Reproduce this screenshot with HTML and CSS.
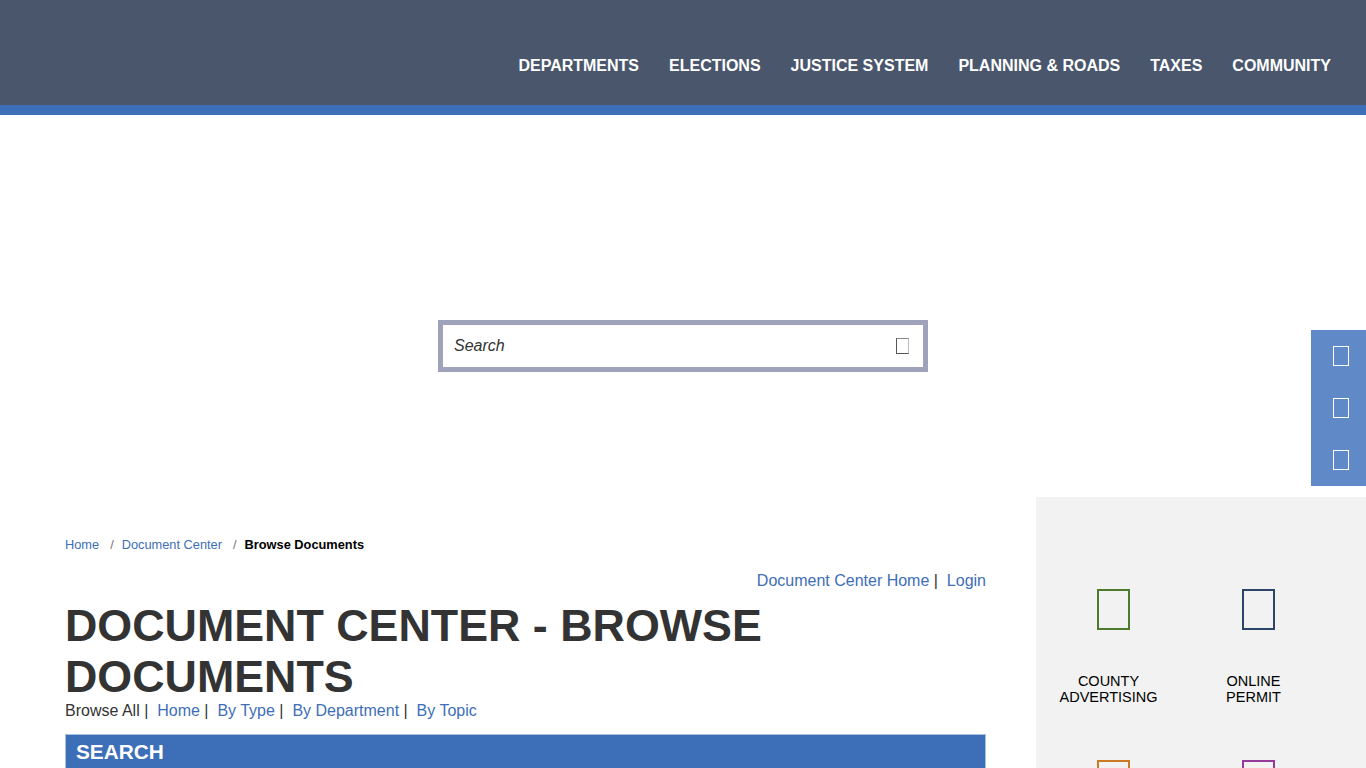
FILE: index.html
```html
<!DOCTYPE html>
<html lang="en">
<head>
<meta charset="utf-8">
<title>Document Center - Browse Documents</title>
<link rel="stylesheet" href="styles.css">
</head>
<body>
<header class="site-header">
  <nav class="main-nav">
    <a href="#">DEPARTMENTS</a>
    <a href="#">ELECTIONS</a>
    <a href="#">JUSTICE SYSTEM</a>
    <a href="#">PLANNING &amp; ROADS</a>
    <a href="#">TAXES</a>
    <a href="#">COMMUNITY</a>
  </nav>
</header>
<section class="hero">
  <form class="search-box">
    <span class="search-text">Search</span>
    <span class="search-icon"></span>
  </form>
</section>
<aside class="side-tabs">
  <span class="tab-icon"></span>
  <span class="tab-icon"></span>
  <span class="tab-icon"></span>
</aside>
<div class="page">
  <main class="content">
    <ol class="crumbs">
      <li><a href="#">Home</a></li>
      <li class="sep">/</li>
      <li><a href="#">Document Center</a></li>
      <li class="sep">/</li>
      <li class="current">Browse Documents</li>
    </ol>
    <p class="top-links"><a href="#">Document Center Home</a> |&nbsp; <a href="#">Login</a></p>
    <h1>DOCUMENT CENTER - BROWSE DOCUMENTS</h1>
    <p class="browse">Browse All |&nbsp; <a href="#">Home</a> |&nbsp; <a href="#">By Type</a> |&nbsp; <a href="#">By Department</a> |&nbsp; <a href="#">By Topic</a></p>
    <div class="search-head">SEARCH</div>
  </main>
  <aside class="quick">
    <a class="quick-item" href="#"><span class="quick-icon green"></span><span class="quick-label">COUNTY<br>ADVERTISING</span></a>
    <a class="quick-item" href="#"><span class="quick-icon navy"></span><span class="quick-label">ONLINE<br>PERMIT</span></a>
    <a class="quick-item" href="#"><span class="quick-icon orange"></span></a>
    <a class="quick-item" href="#"><span class="quick-icon purple"></span></a>
  </aside>
</div>
</body>
</html>
```
FILE: styles.css
```css
* { box-sizing: border-box; }
html, body { margin: 0; height: 768px; overflow: hidden; }
body { font-family: "Liberation Sans", Arial, sans-serif; color: #333; background: #fff; position: relative; }
a { color: #3d6eb8; text-decoration: none; }
p { margin: 0; }

.site-header { height: 115px; background: #49566b; border-bottom: 10px solid #3d6eb8; display: flex; justify-content: flex-end; padding: 57px 35px 0 0; }
.main-nav { display: flex; gap: 30px; font-size: 16px; font-weight: 700; line-height: 18px; }
.main-nav a { color: #fff; }

.hero { height: 382px; display: flex; justify-content: center; padding-top: 205px; }
.search-box { width: 490px; height: 52px; border: 5px solid #9ea3bb; display: flex; align-items: center; justify-content: space-between; padding: 0 14px 0 11px; }
.search-text { font-style: italic; font-size: 16px; color: #333; }
.search-icon { width: 13px; height: 16px; border: 1px solid #555; border-top-color: #888; border-right-color: #bbb; }

.side-tabs { position: absolute; top: 330px; right: 0; width: 55px; height: 156px; background: #5f8ac7; display: flex; flex-direction: column; align-items: center; justify-content: space-around; padding-left: 5px; }
.tab-icon { width: 16px; height: 20px; border: 1px solid #fff; }

.page { display: flex; justify-content: space-between; padding-left: 65px; height: 271px; overflow: hidden; }
.content { width: 921px; padding-top: 40px; }
.crumbs { list-style: none; margin: 0; padding: 0; display: flex; font-size: 12.8px; line-height: 15px; }
.crumbs .sep { margin: 0 8px 0 11px; color: #777; }
.crumbs .current { color: #000; font-weight: 700; }
.top-links { text-align: right; font-size: 16px; line-height: 18px; margin-top: 20px; }
h1 { margin: 10px 0 0; font-size: 44.8px; line-height: 51px; font-weight: 700; color: #333; }
.browse { font-size: 16px; line-height: 18px; }
.search-head { margin-top: 14px; height: 41px; background: #3d6eb8; border: 1px solid #a9bfdd; border-bottom: 0; color: #fff; font-weight: 700; font-size: 20.8px; line-height: 33px; padding-left: 10px; }

.quick { width: 330px; height: 271px; background: #f2f2f2; display: grid; grid-template-columns: 145px 145px; grid-auto-rows: 171px; padding-top: 92px; align-content: start; }
.quick-item { display: flex; flex-direction: column; align-items: center; color: #000; font-size: 14.5px; line-height: 16px; text-align: center; }
.quick-icon { width: 33px; height: 41px; border: 2px solid; margin-left: 10px; flex: none; }
.quick-label { margin-top: 43px; }
.green { border-color: #4f7a2e; }
.navy { border-color: #2b4468; }
.orange { border-color: #c97a22; }
.purple { border-color: #943a9b; }
```
